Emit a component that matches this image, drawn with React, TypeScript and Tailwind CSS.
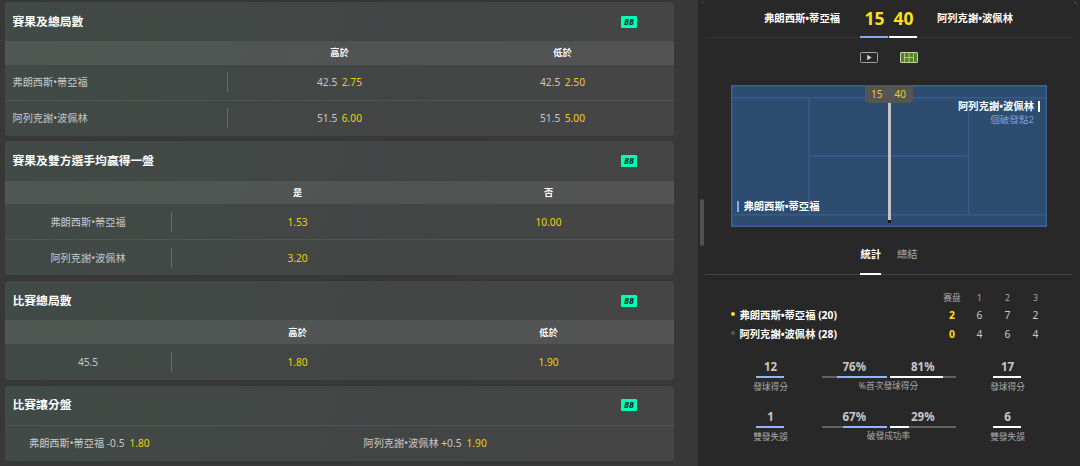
import { ChevronUp } from 'lucide-react';
import clsx from 'clsx';

type Selection = { line?: string; odds: string };
type Row = { label: string; cells: (Selection | null)[] };
type Market = { title: string; columns: string[]; wide?: boolean; rows: Row[] };

const home = '弗朗西斯•蒂亞福';
const away = '阿列克謝•波佩林';

const markets: Market[] = [
  {
    title: '賽果及總局數',
    columns: ['高於', '低於'],
    wide: true,
    rows: [
      { label: home, cells: [{ line: '42.5', odds: '2.75' }, { line: '42.5', odds: '2.50' }] },
      { label: away, cells: [{ line: '51.5', odds: '6.00' }, { line: '51.5', odds: '5.00' }] },
    ],
  },
  {
    title: '賽果及雙方選手均贏得一盤',
    columns: ['是', '否'],
    rows: [
      { label: home, cells: [{ odds: '1.53' }, { odds: '10.00' }] },
      { label: away, cells: [{ odds: '3.20' }, null] },
    ],
  },
  {
    title: '比賽總局數',
    columns: ['高於', '低於'],
    rows: [{ label: '45.5', cells: [{ odds: '1.80' }, { odds: '1.90' }] }],
  },
];

const handicaps = [
  { label: `${home} -0.5`, odds: '1.80' },
  { label: `${away} +0.5`, odds: '1.90' },
];

const setScores = [
  { name: `${home} (20)`, serving: true, sets: '2', games: ['6', '7', '2'] },
  { name: `${away} (28)`, serving: false, sets: '0', games: ['4', '6', '4'] },
];

const stats = [
  { side: '發球得分', left: '12', right: '17', label: '%首次發球得分', home: 76, away: 81 },
  { side: '雙發失誤', left: '1', right: '6', label: '破發成功率', home: 67, away: 29 },
];

const cardClass =
  'overflow-hidden rounded bg-linear-[105deg,#404a46_0%,#424845_30%,#434545_60%,#464545_100%]';

function CardTitle({ children }: { children: string }) {
  return (
    <div className="flex h-[39.5px] items-center justify-between pr-[37px] pl-[7.5px]">
      <h2 className="text-[11.8px] font-bold text-white">{children}</h2>
      <span className="flex h-3 w-4 items-center justify-center rounded-[1px] bg-[#00ffb4] text-[8px] leading-none font-extrabold text-[#123a2f] italic">
        BB
      </span>
    </div>
  );
}

function MarketCard({ market }: { market: Market }) {
  const grid = market.wide ? 'grid-cols-3' : 'grid-cols-[167px_1fr_1fr]';
  const last = market.rows.length - 1;

  return (
    <section className={cardClass}>
      <CardTitle>{market.title}</CardTitle>
      <div className={clsx('grid h-[23.5px] items-center bg-white/8 text-center text-[9.2px] font-bold text-white', grid)}>
        <span />
        {market.columns.map((column) => (
          <span key={column}>{column}</span>
        ))}
      </div>
      {market.rows.map((row, i) => (
        <div
          key={row.label}
          className={clsx(
            'grid items-center text-center',
            i === last ? 'h-9' : 'h-[35px]',
            i > 0 && 'border-t border-white/7',
            grid,
          )}
        >
          <div
            className={clsx(
              'flex h-5 items-center border-r border-white/20',
              market.wide ? 'pl-[7.5px]' : 'justify-center',
            )}
          >
            {row.label}
          </div>
          {row.cells.map((cell, j) => (
            <div key={j} className="flex justify-center gap-[4.5px]">
              {cell?.line && <span>{cell.line}</span>}
              {cell && <span className="text-[#ecd10e]">{cell.odds}</span>}
            </div>
          ))}
        </div>
      ))}
    </section>
  );
}

function HandicapCard() {
  return (
    <section className={cardClass}>
      <CardTitle>比賽讓分盤</CardTitle>
      <div className="grid h-9 grid-cols-2 items-center border-t border-white/7">
        {handicaps.map((item) => (
          <div key={item.label} className="flex gap-[5px] pl-6">
            <span>{item.label}</span>
            <span className="text-[#ecd10e]">{item.odds}</span>
          </div>
        ))}
      </div>
    </section>
  );
}

function Scoreboard() {
  return (
    <header className="flex h-[38px] justify-center border-b border-[#343434] text-white">
      <div className="flex flex-1 justify-end pt-[11px] pr-5 text-[10.3px] leading-[14px] font-bold">{home}</div>
      <div className="flex h-[38px] gap-px text-[17.5px] leading-9 font-bold text-[#ffdf1b]">
        <span className="w-7 border-b-2 border-[#87aaf0] pl-px text-center">15</span>
        <span className="w-7 border-b-2 border-white pl-px text-center">40</span>
      </div>
      <div className="flex flex-1 pt-[11px] pl-5 text-[10.3px] leading-[14px] font-bold">{away}</div>
    </header>
  );
}

function Court() {
  return (
    <div className="relative mx-auto h-[142px] w-[316px]">
      <svg width="316" height="142" className="block">
        <rect x="0.75" y="0.75" width="314.5" height="140.5" fill="#2d4c70" stroke="#38639a" strokeWidth="1.5" />
        <g stroke="#375c8c" strokeWidth="1.5">
          <path d="M2 12.7H314M2 129.7H314M78 13V129M237.5 13V129M78 71H237.5" fill="none" />
        </g>
        <rect x="157" y="134" width="3" height="4" fill="#25171a" />
        <rect x="157" y="16" width="3" height="119" fill="#c4c4c4" />
      </svg>
      <div className="absolute top-0 left-[134px] flex h-[17.5px] w-12 items-center justify-center gap-3 rounded-b-sm bg-[#555] text-[10px] text-[#ecd10e]">
        <span>15</span>
        <span>40</span>
      </div>
      <div className="absolute top-[14.5px] right-[7px] flex items-start gap-1 text-right">
        <div>
          <div className="text-[10.3px] leading-[13px] font-bold text-white">{away}</div>
          <div className="text-[9.6px] leading-[13px] text-[#7c9fdc]">個破發點2</div>
        </div>
        <span className="mt-px h-[11px] w-[1.5px] bg-white" />
      </div>
      <div className="absolute top-[114.5px] left-1.5 flex items-center gap-[5px] text-[10.3px] leading-[13px] font-bold text-white">
        <span className="h-[11px] w-[2px] bg-[#87aaf0]" />
        {home}
      </div>
    </div>
  );
}

function StatBar({ value, mirrored }: { value: number; mirrored?: boolean }) {
  return (
    <div className="flex w-[65.5px] flex-col items-center">
      <span className="text-[11.5px] leading-4 font-bold">{value}%</span>
      <div className={clsx('mt-px flex h-0.5 w-full bg-[#626262]', mirrored && 'justify-end')}>
        <div className={mirrored ? 'bg-[#94b5fb]' : 'bg-white'} style={{ width: `${value}%` }} />
      </div>
    </div>
  );
}

function SideStat({ value, label, home }: { value: string; label: string; home?: boolean }) {
  return (
    <div className="flex w-[78px] flex-col items-center">
      <span className="pl-px text-[11.5px] leading-4 font-bold">{value}</span>
      <span className={clsx('mt-px h-0.5 w-7', home ? 'bg-[#94b5fb]' : 'bg-white')} />
      <span className="mt-[3px] pl-px text-[8.7px] leading-[13px] text-[#aaa]">{label}</span>
    </div>
  );
}

function MatchPanel() {
  return (
    <aside className="relative h-full w-[382px] bg-[#282828] pr-2 pl-[7px]">
      <ChevronUp className="absolute top-0 left-0.5 size-[5px] text-[#888]" />
      <ChevronUp className="absolute top-0 right-0.5 size-[5px] text-[#aaa]" />
      <span className="absolute top-[199px] left-[1.5px] h-[47px] w-1 rounded-full bg-[#525252]" />

      <Scoreboard />

      <div className="flex h-[47.4px] items-start justify-center gap-[22px] pt-3.5">
        <svg width="18" height="11" viewBox="0 0 18 11">
          <rect x="0.5" y="0.5" width="17" height="10" rx="1" fill="none" stroke="#a2a2a2" />
          <path d="M7.2 2.8V8.2L11.6 5.5Z" fill="#d5d5d5" />
        </svg>
        <svg width="18" height="11" viewBox="0 0 18 11">
          <rect x="0.5" y="0.5" width="17" height="10" rx="0.5" fill="#568221" stroke="#c3d2ad" />
          <path d="M4.5 1V10M13.5 1V10M4.5 5.5H13.5M9 1V10" fill="none" stroke="#b5c99a" strokeWidth="0.9" />
        </svg>
      </div>

      <Court />

      <nav className="mt-[20.6px] flex h-[27px] justify-center gap-4 border-b border-[#454545] pl-px text-[10.3px] leading-[13px]">
        <span className="h-[27px] border-b-2 border-white font-bold text-white">統計</span>
        <span className="text-[#a9a9a9]">總結</span>
      </nav>

      <div className="mt-4 grid grid-cols-[207px_28px_28px_28px_28px] items-center pl-[25.5px] text-center">
        <span />
        <span className="pl-px text-[8.7px] leading-[15px] text-[#aaa]">赛盘</span>
        {['1', '2', '3'].map((set) => (
          <span key={set} className="text-[8.7px] leading-[15px] text-[#aaa]">
            {set}
          </span>
        ))}
        {setScores.map((player) => (
          <div key={player.name} className="col-span-5 grid h-[19px] grid-cols-subgrid items-center text-[10.3px]">
            <div className="flex items-center gap-[5px] font-bold text-white">
              <i className={clsx('-mt-[3px] size-1 rounded-full', player.serving ? 'bg-[#ffdf1b]' : 'bg-[#555]')} />
              {player.name}
            </div>
            <span className="pl-px font-bold text-[#ffdf1b]">{player.sets}</span>
            {player.games.map((game, i) => (
              <span key={i}>{game}</span>
            ))}
          </div>
        ))}
      </div>

      <div className="mt-[15px] flex flex-col gap-3.5">
        {stats.map((stat) => (
          <div key={stat.label} className="flex h-9 justify-center">
            <SideStat value={stat.left} label={stat.side} home />
            <div className="mx-[12.5px] w-[134px]">
              <div className="flex justify-between">
                <StatBar value={stat.home} mirrored />
                <StatBar value={stat.away} />
              </div>
              <div className="mt-[2.5px] text-center text-[8.7px] leading-[13px] text-[#aaa]">{stat.label}</div>
            </div>
            <SideStat value={stat.right} label={stat.side} />
          </div>
        ))}
      </div>
    </aside>
  );
}

export default function App() {
  return (
    <div className="flex h-[466px] w-[1080px] overflow-hidden bg-[#383838] font-['Noto_Sans','Noto_Sans_CJK_TC',sans-serif] text-[10.2px] leading-none whitespace-nowrap text-[#c8c8c8]">
      <main className="flex w-[698px] flex-col gap-[5.6px] pt-[1.8px] pr-6 pl-[5px]">
        {markets.map((market) => (
          <MarketCard key={market.title} market={market} />
        ))}
        <HandicapCard />
      </main>
      <MatchPanel />
    </div>
  );
}
